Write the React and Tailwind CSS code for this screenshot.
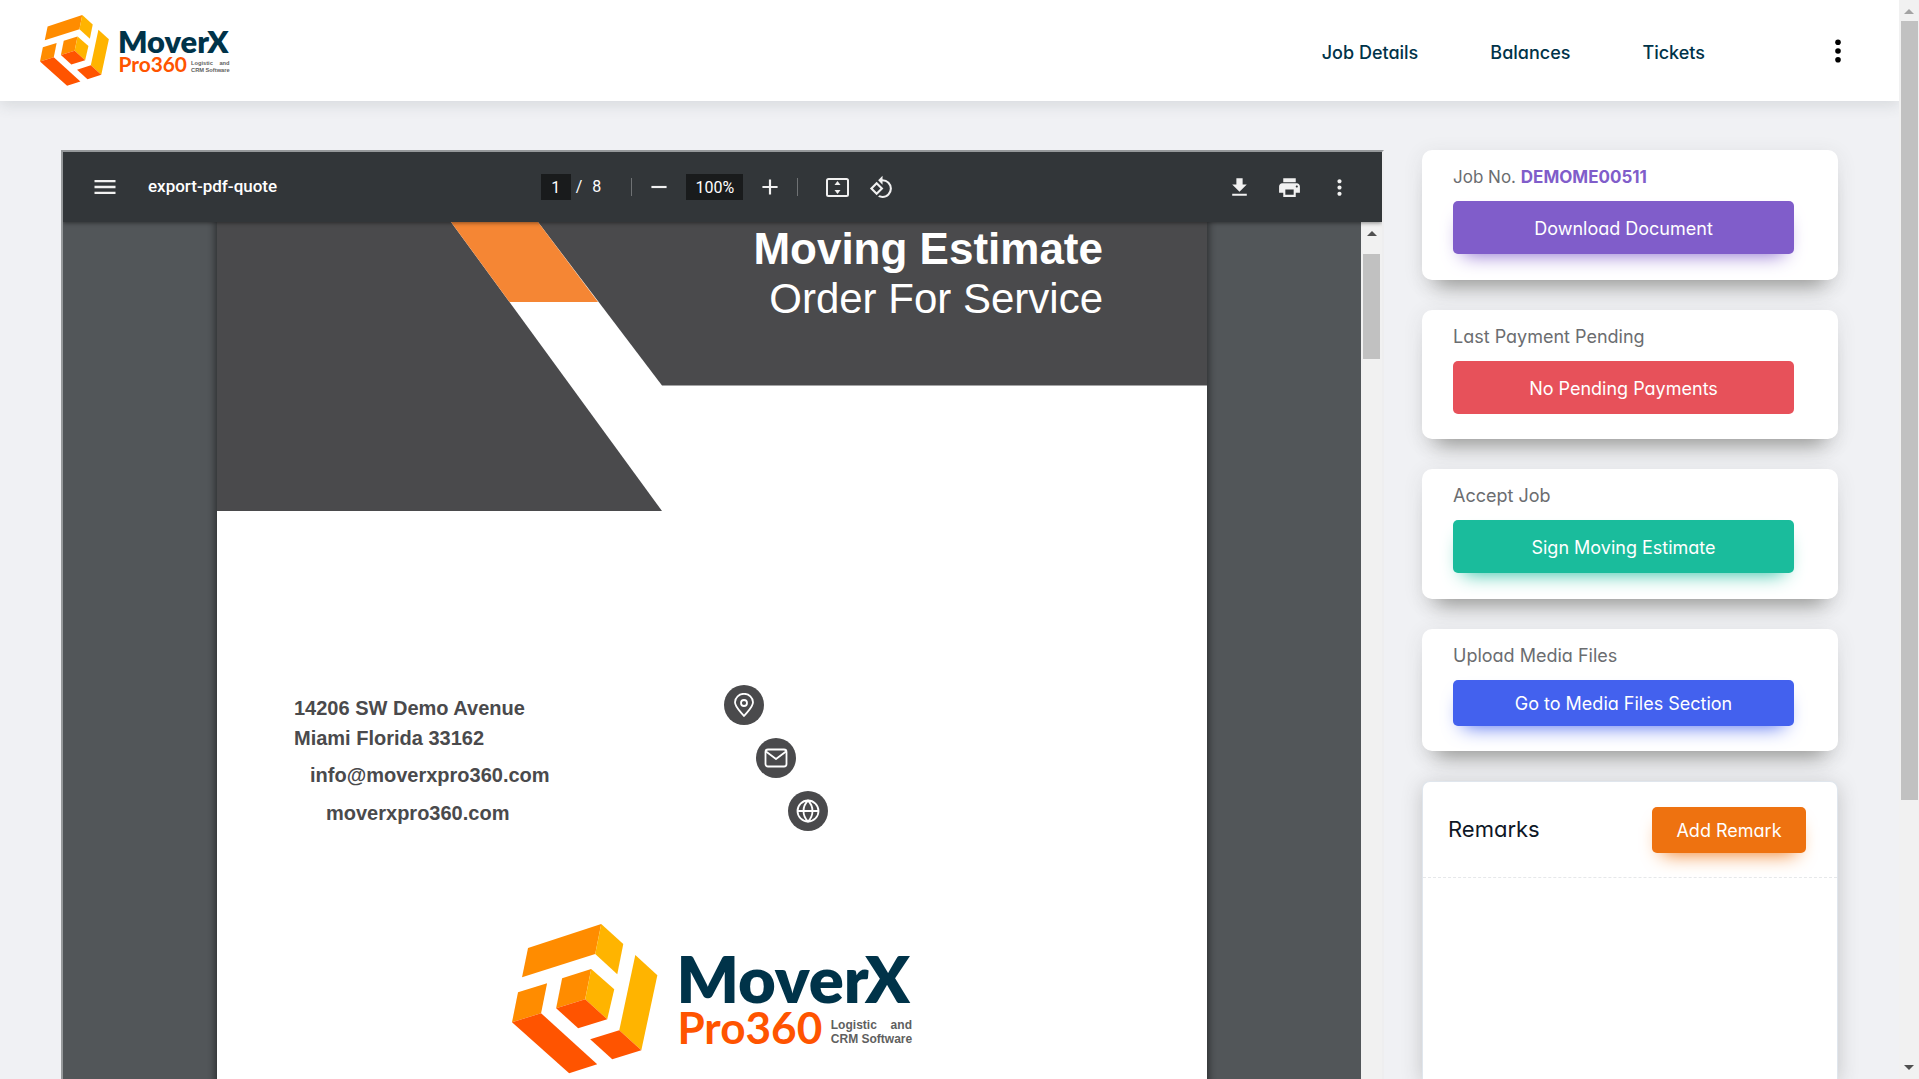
import React from "react";
import {
  MdMenu,
  MdFileDownload,
  MdPrint,
  MdMoreVert,
  MdAdd,
  MdRemove,
  MdRotate90DegreesCcw,
} from "react-icons/md";

function Logo({ className }) {
  return (
    <svg viewBox="0 0 400 150" className={className} role="img" aria-label="MoverX Pro360 Logistic and CRM Software">
      <g>
        <path fill="#ff8c00" d="M16 24 89 0 83 30 10 53Z" />
        <path fill="#ffb400" d="M89 0 111 20 105 50 83 30Z" />
        <path fill="#ff8c00" d="M6 68 35 59 29 89 0 98Z" />
        <path fill="#ff5400" d="M0 98 29 89 85 140 57 149Z" />
        <path fill="#ffb400" d="M123 31 145 51 129 126 107 106Z" />
        <path fill="#ff5400" d="M107 106 129 126 100 135 78 115Z" />
        <path fill="#ff8c00" d="M50 54 79 45 73 75 44 84Z" />
        <path fill="#ffb400" d="M79 45 102 65 95 95 73 75Z" />
        <path fill="#ff5400" d="M44 84 73 75 95 95 66 104Z" />
      </g>
      <text x="164" y="79" fontFamily="Lato, sans-serif" fontWeight="800" fontSize="65" fill="#003349">MoverX</text>
      <text x="165" y="120" fontFamily="Lato, sans-serif" fontWeight="700" fontSize="44" fill="#ff5400">Pro360</text>
      <text x="318" y="105" fontFamily="Liberation Sans, sans-serif" fontWeight="700" fontSize="12" fill="#5f5f60">Logistic</text>
      <text x="399" y="105" textAnchor="end" fontFamily="Liberation Sans, sans-serif" fontWeight="700" fontSize="12" fill="#5f5f60">and</text>
      <text x="318" y="119" fontFamily="Liberation Sans, sans-serif" fontWeight="700" fontSize="12" fill="#5f5f60">CRM Software</text>
    </svg>
  );
}

function Header() {
  const link = "text-[18px] font-medium text-[#003349] hover:underline";
  return (
    <header className="relative z-10 flex h-[101px] shrink-0 items-center justify-between bg-white pl-10 pr-[49px] shadow-[0_4px_14px_rgba(60,70,80,0.14)]">
      <a href="#home"><Logo className="block w-[190px]" /></a>
      <div className="flex items-center gap-[121px]">
        <nav className="flex items-center gap-[72px] pt-1">
          <a href="#job-details" className={link}>Job Details</a>
          <a href="#balances" className={link}>Balances</a>
          <a href="#tickets" className={link}>Tickets</a>
        </nav>
        <button type="button" aria-label="Menu" className="flex w-6 justify-center">
          <svg width="6" height="24" viewBox="0 0 6 24" className="fill-black">
            <circle cx="3" cy="3.3" r="2.8" /><circle cx="3" cy="12" r="2.8" /><circle cx="3" cy="20.7" r="2.8" />
          </svg>
        </button>
      </div>
    </header>
  );
}

function Toolbar() {
  const field = "h-[26px] bg-[#191b1c] text-center";
  return (
    <div className="relative z-10 grid h-[70px] grid-cols-[1fr_auto_1fr] items-center bg-[#323639] pl-7 pr-[30px] font-[Roboto,sans-serif] text-base text-white shadow-[0_1px_4px_rgba(0,0,0,0.45)]">
      <div className="flex items-center gap-[29px]">
        <button type="button" aria-label="Menu"><MdMenu size={28} className="text-[#f1f1f1]" /></button>
        <h1 className="text-[17px] font-medium">export-pdf-quote</h1>
      </div>
      <div className="flex items-center pr-2">
        <input aria-label="Page number" defaultValue="1" className={field + " w-[30px]"} />
        <span className="ml-[5px]">/</span>
        <span className="ml-2.5">8</span>
        <span className="ml-[30px] h-[18px] w-px bg-[#6f7274]" />
        <button type="button" aria-label="Zoom out" className="ml-3.5"><MdRemove size={26} className="text-[#f1f1f1]" /></button>
        <input aria-label="Zoom" defaultValue="100%" className={field + " ml-3.5 w-[57px]"} />
        <button type="button" aria-label="Zoom in" className="ml-3.5"><MdAdd size={26} className="text-[#f1f1f1]" /></button>
        <span className="ml-3.5 h-[18px] w-px bg-[#6f7274]" />
        <button type="button" aria-label="Fit to page" className="ml-7">
          <svg width="23" height="19" viewBox="0 0 23 19" className="block">
            <rect x="1" y="1" width="21" height="17" rx="1.5" fill="none" stroke="#f1f1f1" strokeWidth="2" />
            <path d="M11.5 3 14.5 7H8.500ZM11.5 16 14.500 12H8.500Z" fill="#f1f1f1" />
          </svg>
        </button>
        <button type="button" aria-label="Rotate counterclockwise" className="ml-5"><MdRotate90DegreesCcw size={25} className="text-[#f1f1f1]" /></button>
      </div>
      <div className="flex items-center justify-end gap-[25px]">
        <button type="button" aria-label="Download"><MdFileDownload size={25} className="text-[#f1f1f1]" /></button>
        <button type="button" aria-label="Print"><MdPrint size={25} className="text-[#f1f1f1]" /></button>
        <button type="button" aria-label="More actions"><MdMoreVert size={25} className="text-[#f1f1f1]" /></button>
      </div>
    </div>
  );
}

const badge = "flex size-10 items-center justify-center rounded-full bg-[#4a4a4c]";
const glyph = { width: 24, height: 24, viewBox: "0 0 24 24", fill: "none", stroke: "#fff", strokeWidth: 1.8, strokeLinejoin: "round" };

function DocumentPage() {
  return (
    <article className="mx-auto w-[990px] max-w-full overflow-hidden bg-white font-['Liberation_Sans',Arial,sans-serif] shadow-[0_0_7px_2px_rgba(0,0,0,0.45)]">
      <div className="relative h-[289px]">
        <svg viewBox="0 0 990 289" preserveAspectRatio="none" className="absolute inset-0 size-full" aria-hidden="true">
          <path fill="#4a4a4c" d="M0 0H234L445 289H0Z" />
          <path fill="#4a4a4c" d="M321 0H990V163.500H445Z" />
          <path fill="#f58634" d="M234 0H321L381 80H292.500Z" />
        </svg>
        <div className="relative pr-[104px] pt-[2px] text-right text-white">
          <h2 className="text-[44px] font-bold leading-[50px]">Moving Estimate</h2>
          <p className="text-[42px] leading-[50px]">Order For Service</p>
        </div>
      </div>
      <div className="grid grid-cols-[507px_1fr] pt-[174px]">
        <address className="pl-[77px] pt-2 text-[20px] font-bold not-italic leading-[30px] text-[#4a4a4c]">
          <p>14206 SW Demo Avenue</p>
          <p>Miami Florida 33162</p>
          <p className="mt-[7px] pl-4"><a href="mailto:info@moverxpro360.com">info@moverxpro360.com</a></p>
          <p className="mt-2 pl-8"><a href="#website">moverxpro360.com</a></p>
        </address>
        <div className="flex flex-col gap-[13px]">
          <span className={badge}>
            <svg {...glyph}><path d="M12 23C7 17 3 13.800 3 9.300A9 8.500 0 0 1 21 9.300C21 13.800 17 17 12 23Z" /><circle cx="12" cy="10" r="3" /></svg>
          </span>
          <span className={badge + " ml-8"}>
            <svg {...glyph}><rect x="1.500" y="3.500" width="21" height="17" rx="2.500" /><path d="M2 5.500 12 13 22 5.500" /></svg>
          </span>
          <span className={badge + " ml-16"}>
            <svg {...glyph}><circle cx="12" cy="12" r="10.500" /><path d="M1.500 12H22.500M12 1.500C6 7.500 6 16.500 12 22.500C18 16.500 18 7.500 12 1.500Z" /></svg>
          </span>
        </div>
      </div>
      <Logo className="ml-[295px] mt-[93px] mb-40 block w-[401px]" />
    </article>
  );
}

function Viewer() {
  return (
    <section aria-label="PDF viewer" className="flex min-h-0 min-w-0 flex-col overflow-hidden border-2 border-b-0 border-l-[#96999b] border-r-[#eeeeef] border-t-[#96999b]">
      <Toolbar />
      <div className="flex min-h-0 flex-1 bg-[#525659]">
        <div className="min-w-0 flex-1 overflow-hidden"><DocumentPage /></div>
        <div className="flex w-[21px] flex-col items-center bg-[#f1f1f1] pt-2" aria-hidden="true">
          <svg width="10" height="6" viewBox="0 0 10 6" className="fill-[#505050]"><path d="M5 1 10 6H0Z" /></svg>
          <div className="mt-[18px] h-[105px] w-[17px] bg-[#c1c1c1]" />
        </div>
      </div>
    </section>
  );
}

const cards = [
  { label: "Job No. ", code: "DEMOME00511", action: "Download Document", text: "text-[17px]", style: "h-[53px] pt-0.5 bg-[#805dca] shadow-[0_10px_20px_-10px_#805dca]", pad: "pb-[26px]" },
  { label: "Last Payment Pending", action: "No Pending Payments", text: "text-[18px]", style: "h-[53px] pt-0.5 bg-[#e7515a]", pad: "pb-[25px]" },
  { label: "Accept Job", action: "Sign Moving Estimate", text: "text-[18px]", style: "h-[53px] pt-0.5 bg-[#1abc9c] shadow-[0_10px_20px_-10px_#1abc9c]", pad: "pb-[26px]" },
  { label: "Upload Media Files", action: "Go to Media Files Section", text: "text-[18px]", style: "h-[46px] bg-[#4361ee] shadow-[0_10px_20px_-10px_#4361ee]", pad: "pb-[25px]" },
];

const cardShadow = "shadow-[0_20px_20px_-14px_rgba(60,60,50,0.45),0_4px_20px_rgba(60,60,60,0.1)]";

function Sidebar() {
  return (
    <aside className="flex min-h-0 flex-col gap-[30px]">
      {cards.map((c) => (
        <section key={c.action} className={"shrink-0 rounded-[10px] bg-white pl-[31px] pr-11 pt-[15px] " + cardShadow + " " + c.pad}>
          <p className={"mb-3 leading-6 text-[#6b6d70] " + c.text}>
            {c.label}
            {c.code && <b className="font-bold text-[#805dca]">{c.code}</b>}
          </p>
          <button type="button" className={"w-full rounded-[5px] text-[18px] text-white " + c.style}>{c.action}</button>
        </section>
      ))}
      <section className="min-h-0 flex-1 rounded-t-[8px] border border-b-0 border-[#e0e6ed] bg-white shadow-[0_4px_20px_rgba(60,60,60,0.25)]">
        <div className="flex h-24 items-center justify-between border-b border-dashed border-[#e6e8ea] pl-[25px] pr-[31px]">
          <h2 className="text-[22px] text-[#0e1726]">Remarks</h2>
          <button type="button" className="h-[46px] w-[154px] rounded-[5px] bg-[#ee7210] pt-0.5 text-[18px] text-white shadow-[0_10px_20px_-10px_#ee7210]">Add Remark</button>
        </div>
      </section>
    </aside>
  );
}

function PageScrollbar() {
  return (
    <div className="flex w-5 shrink-0 flex-col items-center justify-between bg-[#f1f1f1] pb-[9px] pt-[9px]" aria-hidden="true">
      <svg width="10" height="5" viewBox="0 0 10 5" className="shrink-0 fill-[#a3a3a3]"><path d="M5 0 10 5H0Z" /></svg>
      <div className="mb-auto mt-[7px] h-[73.4%] w-[17px] bg-[#c1c1c1]" />
      <svg width="10" height="5" viewBox="0 0 10 5" className="shrink-0 fill-[#505050]"><path d="M5 5 10 0H0Z" /></svg>
    </div>
  );
}

export default function App() {
  return (
    <div className="flex h-screen overflow-hidden bg-[#f0f1f4] font-[Inter,sans-serif] [font-feature-settings:'cv11']">
      <div className="flex min-w-0 flex-1 flex-col overflow-hidden">
        <Header />
        <main className="grid min-h-0 flex-1 grid-cols-[minmax(0,1fr)_416px] grid-rows-[minmax(0,1fr)] gap-[38px] pl-[61px] pr-[61px] pt-[49px]">
          <Viewer />
          <Sidebar />
        </main>
      </div>
      <PageScrollbar />
    </div>
  );
}
